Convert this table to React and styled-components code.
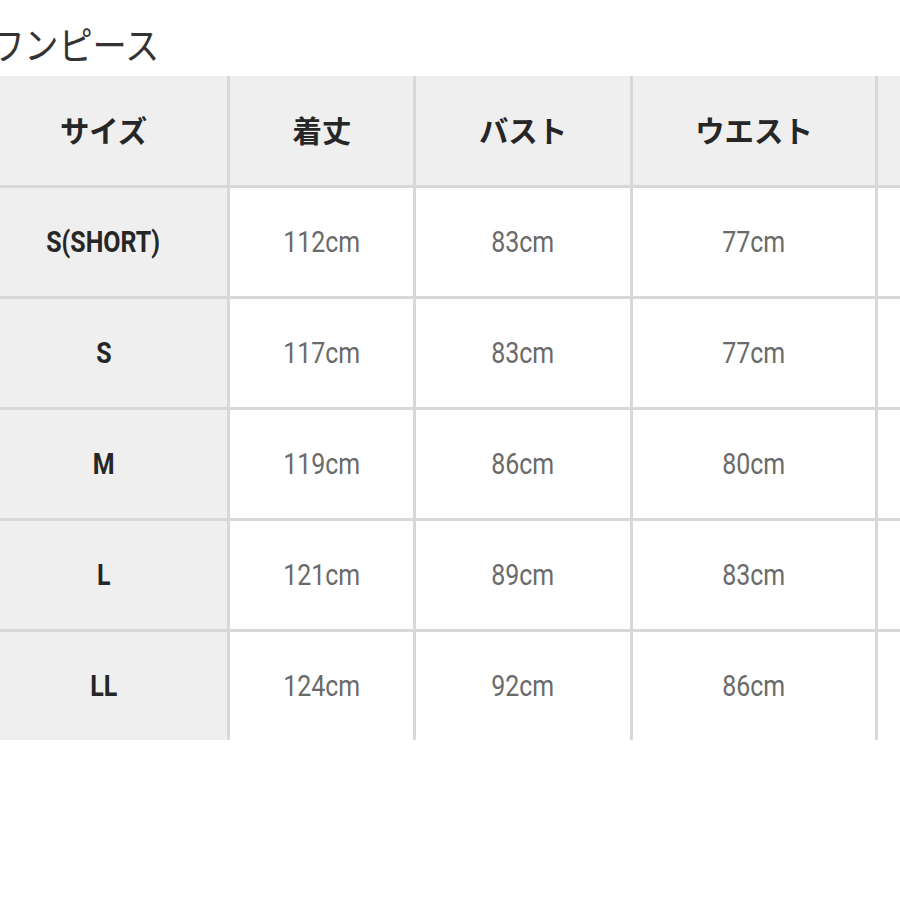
import React from "react";
import styled, { createGlobalStyle } from "styled-components";

const GlobalStyle = createGlobalStyle`
  html, body {
    margin: 0;
    padding: 0;
    background: #ffffff;
  }
  body {
    font-family: Roboto, "Noto Sans CJK JP", sans-serif;
  }
`;

const Page = styled.div`
  width: 900px;
  height: 900px;
  overflow: hidden;
  background: #ffffff;
  padding-top: 27px;
  box-sizing: border-box;
`;

const Title = styled.h2`
  margin: 0 0 11px -10px;
  font-size: 38px;
  line-height: 38px;
  font-weight: 400;
  color: #333333;
`;

// the screenshot is a little squeezed sideways, so the glyphs are too
const Squeeze = styled.span`
  display: inline-block;
  white-space: nowrap;
  transform: scaleX(${(p) => p.$x || 0.86});
  transform-origin: ${(p) => (p.$left ? "left center" : "center center")};
`;

const Table = styled.div`
  display: grid;
  grid-template-columns: 247px 183px 214px 242px 240px;
  grid-template-rows: 109px repeat(5, 108px);
  gap: 3px;
  margin-left: -20px;
  width: max-content;
  background: #d8d8d8;
`;

const Cell = styled.div`
  display: flex;
  align-items: center;
  justify-content: center;
  padding-bottom: ${(p) => (p.$head ? "3px" : "0")};
  background: ${(p) => (p.$shaded ? "#efefef" : "#ffffff")};
  color: ${(p) => (p.$strong ? "#262626" : "#6a6a6a")};
  font-weight: ${(p) => (p.$strong ? 700 : 400)};
  font-size: ${(p) => (p.$head ? "30px" : "29px")};
`;

const headers = ["サイズ", "着丈", "バスト", "ウエスト", ""];

const rows = [
  ["S(SHORT)", "112cm", "83cm", "77cm"],
  ["S", "117cm", "83cm", "77cm"],
  ["M", "119cm", "86cm", "80cm"],
  ["L", "121cm", "89cm", "83cm"],
  ["LL", "124cm", "92cm", "86cm"],
];

export default function App() {
  return (
    <Page>
      <GlobalStyle />
      <Title>
        <Squeeze $left $x={0.9}>ワンピース</Squeeze>
      </Title>
      <Table>
        {headers.map((h, i) => (
          <Cell key={"h" + i} $shaded $strong $head>
            <Squeeze $x={0.98}>{h}</Squeeze>
          </Cell>
        ))}
        {rows.map((r) => (
          <React.Fragment key={r[0]}>
            <Cell $shaded $strong>
              <Squeeze>{r[0]}</Squeeze>
            </Cell>
            <Cell>
              <Squeeze>{r[1]}</Squeeze>
            </Cell>
            <Cell>
              <Squeeze>{r[2]}</Squeeze>
            </Cell>
            <Cell>
              <Squeeze>{r[3]}</Squeeze>
            </Cell>
            <Cell />
          </React.Fragment>
        ))}
      </Table>
    </Page>
  );
}
